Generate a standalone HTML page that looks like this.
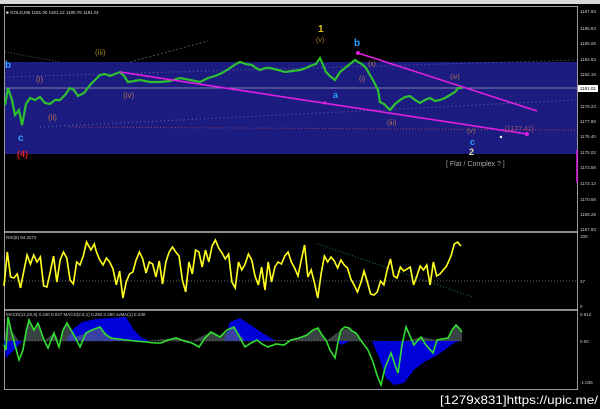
<!DOCTYPE html>
<html><head><meta charset="utf-8"><style>
html,body{margin:0;padding:0;background:#000;width:600px;height:409px;overflow:hidden}
svg{display:block}
text{font-family:"Liberation Sans",sans-serif}
</style></head><body>
<svg width="600" height="409" viewBox="0 0 600 409" xmlns="http://www.w3.org/2000/svg">
<rect width="600" height="409" fill="#000"/>
<rect x="0" y="0" width="600" height="4" fill="#d8d8d8"/>
<rect x="4.5" y="6.5" width="573" height="383" fill="none" stroke="#9a9a9a" stroke-width="1"/>
<line x1="4" y1="232" x2="578" y2="232" stroke="#bbb" stroke-width="1.5"/>
<line x1="4" y1="310" x2="578" y2="310" stroke="#bbb" stroke-width="1.5"/>
<rect x="5" y="62" width="572" height="92" fill="#1c1c80"/>
<line x1="5" y1="88" x2="577" y2="88" stroke="#8080b0" stroke-width="1"/>
<line x1="70" y1="127" x2="577" y2="130" stroke="#a04060" stroke-width="1" stroke-dasharray="1,2"/>
<line x1="5" y1="52" x2="60" y2="62" stroke="#555" stroke-dasharray="1,2"/>
<line x1="130" y1="62" x2="208" y2="41" stroke="#556" stroke-dasharray="2,2"/>
<line x1="5" y1="77" x2="577" y2="60" stroke="#6666aa" stroke-dasharray="1,3"/>
<line x1="40" y1="127" x2="577" y2="100" stroke="#6666aa" stroke-dasharray="1,3"/>
<polyline fill="none" stroke="#2fc02f" stroke-width="2.2" points="5,105 8,88 12,100 15,115 19,110 22,125 26,104 30,98 35,100 40,97 45,103 50,104 55,100 60,100 65,95 70,88 74,90 78,96 84,93 90,85 95,80 100,75 105,74 110,76 115,74 120,72 124,76 128,82 134,81 140,80 150,82 160,82 170,81 180,78 190,80 200,82 208,78 215,76 222,73 230,68 236,64 240,62 246,64 252,65 256,68 260,70 265,68 270,68 278,70 285,72 292,71 300,70 306,68 310,66 316,64 320,58 323,65 326,72 330,76 335,80 340,72 345,68 350,64 355,60 358,62 362,64 366,68 370,75 374,82 378,90 380,102 384,104 390,110 395,104 400,100 405,97 410,96 415,100 420,103 425,100 430,98 435,101 440,100 445,98 450,95 455,92 458,88 462,88"/>
<g stroke="#e020e0" stroke-width="1.6">
<line x1="120" y1="72" x2="527" y2="134"/>
<line x1="358" y1="53" x2="537" y2="111"/>
</g>
<circle cx="325" cy="103" r="1.6" fill="#e020e0"/>
<circle cx="358" cy="53" r="2" fill="#e020e0"/>
<circle cx="527" cy="134" r="2" fill="#e020e0"/>
<circle cx="501" cy="137" r="1.2" fill="#fff"/>
<line x1="577" y1="150" x2="577" y2="183" stroke="#e020e0" stroke-width="1.5"/>
<g font-size="8">
<text x="6" y="14" fill="#ddd" font-size="4.5">■ GOLD,M5  1181.00 1181.12 1180.76 1181.01</text>
<text x="5" y="68" fill="#2aa0ff" font-size="10" font-weight="bold">b</text>
<text x="36" y="82" fill="#b07050">(i)</text>
<text x="95" y="55" fill="#a0802a">(iii)</text>
<text x="48" y="120" fill="#b07050">(ii)</text>
<text x="123" y="98" fill="#b07050">(iv)</text>
<text x="18" y="141" fill="#2aa0ff" font-size="10" font-weight="bold">c</text>
<text x="17" y="157" fill="#e02020" font-size="9" font-weight="bold">(4)</text>
<text x="318" y="32" fill="#e0c020" font-size="10" font-weight="bold">1</text>
<text x="316" y="42" fill="#b08040" font-size="7">(v)</text>
<text x="354" y="46" fill="#2aa0ff" font-size="10" font-weight="bold">b</text>
<text x="368" y="66" fill="#b07050" font-size="7">(ii)</text>
<text x="359" y="81" fill="#b07050" font-size="7">(i)</text>
<text x="333" y="98" fill="#2aa0ff" font-size="9" font-weight="bold">a</text>
<text x="387" y="125" fill="#b07050" font-size="7">(iii)</text>
<text x="450" y="79" fill="#b07050" font-size="7">(iv)</text>
<text x="467" y="133" fill="#b07050" font-size="7">(v)</text>
<text x="505" y="131" fill="#a05070" font-size="7">[1177.41]</text>
<text x="470" y="145" fill="#2aa0ff" font-size="9" font-weight="bold">c</text>
<text x="469" y="155" fill="#e0e0a0" font-size="9" font-weight="bold">2</text>
<text x="446" y="166" fill="#aaa" font-size="7">[ Flat / Complex ? ]</text>
</g>
<g fill="#ccc" font-size="4.5">
<text x="580" y="13">1187.93</text><text x="580" y="30">1186.53</text><text x="580" y="45">1185.08</text>
<text x="580" y="61">1183.63</text><text x="580" y="76">1182.18</text>
<rect x="578" y="85" width="20" height="7" fill="#fff"/><text x="580" y="90" fill="#000">1181.01</text>
<text x="580" y="108">1179.23</text><text x="580" y="123">1177.88</text><text x="580" y="138">1176.40</text>
<text x="580" y="154">1175.03</text><text x="580" y="169">1173.58</text><text x="580" y="185">1172.13</text>
<text x="580" y="201">1170.68</text><text x="580" y="216">1169.28</text><text x="580" y="231">1167.83</text>
<text x="580" y="238">100</text><text x="580" y="283">37</text><text x="580" y="308">0</text>
<text x="580" y="316">0.612</text><text x="580" y="343">0.00</text><text x="580" y="384">-1.035</text>
</g>
<text x="6" y="239" fill="#ccc" font-size="4.5">RSI(8) 94.3272</text>
<line x1="5" y1="281" x2="577" y2="281" stroke="#666" stroke-dasharray="1,2"/>
<line x1="318" y1="244" x2="473" y2="297" stroke="#2a7a5a" stroke-dasharray="1,2"/>
<polyline transform="translate(4,0) scale(1.101,1) translate(-4,0)" fill="none" stroke="#ffff20" stroke-width="1.5" points="4,286 7,252 10,277 13,278 16,274 19,288 22,271 25,255 28,264 31,255 34,262 37,257 40,286 43,287 46,272 49,256 52,282 55,260 58,252 61,258 64,280 67,284 70,262 73,265 76,256 79,242 83,250 86,244 88,252 91,260 94,265 97,258 100,262 103,269 106,285 109,271 112,298 115,282 118,274 121,272 124,260 127,252 130,259 133,273 136,262 139,264 142,277 145,261 148,284 151,262 154,252 157,247 160,252 163,256 166,280 169,292 172,262 175,274 178,250 181,252 184,267 187,250 190,262 193,246 196,240 199,248 202,253 205,259 208,254 211,282 214,288 217,262 220,270 223,264 226,254 229,260 232,276 235,285 238,267 241,290 244,262 247,282 250,267 253,262 256,264 259,256 262,252 265,262 268,268 271,276 274,260 277,245 280,277 283,270 286,283 289,298 292,274 295,256 298,262 301,257 304,261 307,268 310,260 313,265 316,268 319,279 322,285 325,292 328,283 331,271 334,282 337,294 340,295 343,292 346,281 349,285 352,270 355,259 358,276 361,278 364,267 367,271 370,269 373,267 376,285 379,276 382,266 385,270 388,265 391,285 394,262 397,276 400,274 403,270 406,266 410,256 413,244 416,242 419,246"/>
<text x="6" y="316" fill="#ccc" font-size="4.5">MACD(12,26,9) 0.240 0.047   MACD(2,8,1) 0.292 0.280   vvMA(1) 0.240</text>
<line x1="5" y1="341" x2="462" y2="341" stroke="#555" stroke-dasharray="1,2"/>
<g fill="#0000d8">
<polygon points="4,341 6,358 12,352 18,346 22,341"/>
<polygon points="66,341 72,330 82,322 96,319 110,318 126,317 134,330 142,338 150,341"/>
<polygon points="224,341 230,322 240,318 252,326 264,334 276,341"/>
<polygon points="336,341 342,345 350,341"/>
<polygon points="372,341 380,360 386,378 394,385 404,383 414,370 424,362 436,356 446,349 454,343 460,341"/>
</g>
<polygon fill="#6a7a7a" opacity="0.55" points="4,341 8,317 11,330 19,341 23,341 29,320 34,330 38,323 44,341 54,333 59,341 67,323 75,337 86,333 100,327 111,338 126,340 146,341 176,338 192,341 211,332 220,337 234,327 245,341 291,340 307,335 318,328 326,341 341,330 349,328 356,333 362,341 406,341 421,337 437,340 448,338 456,325 462,332 462,341"/>
<polyline fill="none" stroke="#30e030" stroke-width="1.6" points="4,345 6,350 8,317 11,330 15,345 19,360 23,350 26,332 29,320 34,330 38,323 44,340 48,348 54,333 59,347 63,330 67,323 71,330 75,337 80,347 86,333 92,330 100,327 105,334 111,338 118,339 126,340 135,341 146,342 155,343 161,343 168,340 176,338 184,341 192,343 199,347 205,338 211,332 220,337 227,330 234,327 240,338 245,347 251,343 257,340 262,344 268,347 276,344 284,345 291,340 299,338 307,335 313,330 318,328 322,335 326,340 330,350 335,358 338,342 341,330 345,327 349,328 352,331 356,333 362,342 368,350 373,362 377,375 381,385 385,368 391,353 395,365 398,373 402,345 406,327 410,336 414,345 418,340 421,337 426,345 433,353 437,340 442,339 448,338 452,330 456,325 459,328 462,332"/>
<text x="440" y="404" fill="#fff" font-size="12" textLength="158" lengthAdjust="spacingAndGlyphs" font-family="Liberation Mono,monospace">[1279x831]https://upic.me/</text>
</svg>
</body></html>
